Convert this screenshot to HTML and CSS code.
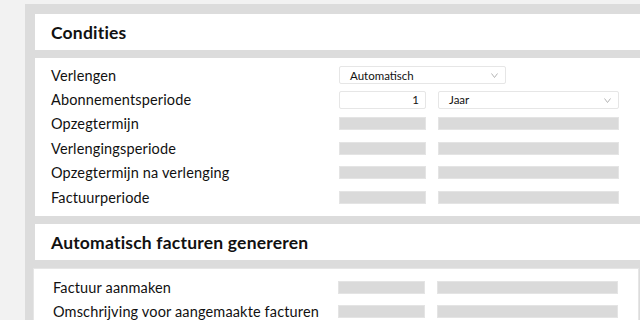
FILE: index.html
```html
<!DOCTYPE html>
<html lang="nl">
<head>
    <meta charset="UTF-8">
    <meta name="viewport" content="width=device-width, initial-scale=1.0">
    <title>Condities</title>
    <link rel="stylesheet" href="styles.css">
</head>
<body>
    <div class="panel">
        <div class="card-head">Condities</div>

        <div class="card-body">
            <div class="row">
                <span class="label">Verlengen</span>
                <div class="select wide">
                    <span>Automatisch</span>
                    <svg class="chev" width="7" height="5" viewBox="0 0 7 5"><polyline points="0.5,0.5 3.5,4.5 6.5,0.5" fill="none" stroke="#b5b5b5" stroke-width="1"/></svg>
                </div>
            </div>
            <div class="row">
                <span class="label">Abonnementsperiode</span>
                <div class="input num">1</div>
                <div class="select long">
                    <span>Jaar</span>
                    <svg class="chev" width="7" height="5" viewBox="0 0 7 5"><polyline points="0.5,0.5 3.5,4.5 6.5,0.5" fill="none" stroke="#b5b5b5" stroke-width="1"/></svg>
                </div>
            </div>
            <div class="row">
                <span class="label">Opzegtermijn</span>
                <div class="ph short"></div>
                <div class="ph long"></div>
            </div>
            <div class="row">
                <span class="label">Verlengingsperiode</span>
                <div class="ph short"></div>
                <div class="ph long"></div>
            </div>
            <div class="row">
                <span class="label">Opzegtermijn na verlenging</span>
                <div class="ph short"></div>
                <div class="ph long"></div>
            </div>
            <div class="row">
                <span class="label">Factuurperiode</span>
                <div class="ph short"></div>
                <div class="ph long"></div>
            </div>
        </div>

        <div class="card-head">Automatisch facturen genereren</div>

        <div class="card-body boxed">
            <div class="row">
                <span class="label">Factuur aanmaken</span>
                <div class="ph short"></div>
                <div class="ph long"></div>
            </div>
            <div class="row">
                <span class="label">Omschrijving voor aangemaakte facturen</span>
                <div class="ph short"></div>
                <div class="ph long"></div>
            </div>
        </div>
    </div>
</body>
</html>
```

FILE: styles.css
```css
body {
    margin: 0;
    background: #f2f2f2;
    font-family: Lato, "Liberation Sans", sans-serif;
    color: #111;
    overflow: hidden;
}
.panel {
    margin: 4px 0 0 25px;
    padding: 10px 0 0 10px;
    background: #dcdcdc;
    display: flex;
    flex-direction: column;
    gap: 8px;
    height: 320px;
}
.card-head {
    background: white;
    height: 36px;
    padding-left: 16px;
    display: flex;
    align-items: center;
    font-size: 17.5px;
    font-weight: bold;
    letter-spacing: 0.2px;
}
.card-body {
    background: white;
    padding: 5px 0 7px 16px;
}
.card-body.boxed {
    margin-left: -2px;
    margin-right: 1px;
    border: 1px solid #e6e6e6;
    padding: 6px 0 0 19px;
}
.row {
    display: flex;
    align-items: center;
    height: 24.4px;
}
.label {
    width: 288px;
    flex-shrink: 0;
    font-size: 14.5px;
    letter-spacing: 0.15px;
}
.boxed .label {
    width: 285px;
    white-space: nowrap;
}
.select, .input {
    box-sizing: border-box;
    height: 18px;
    border: 1px solid #e6e6e6;
    border-radius: 2px;
    background: white;
    font-size: 11.5px;
    display: flex;
    align-items: center;
}
.select {
    justify-content: space-between;
    padding: 0 7px 0 10px;
}
.select.wide {
    width: 167px;
}
.select.long {
    width: 181px;
    margin-left: 12px;
}
.input.num {
    width: 87px;
    justify-content: flex-end;
    padding-right: 6px;
}
.chev {
    margin-top: 1px;
}
.ph {
    box-sizing: border-box;
    height: 13px;
    background: #dadada;
    border: 1px solid #e4e4e4;
}
.ph.short {
    width: 87px;
}
.ph.long {
    width: 181px;
    margin-left: 12px;
}
```
